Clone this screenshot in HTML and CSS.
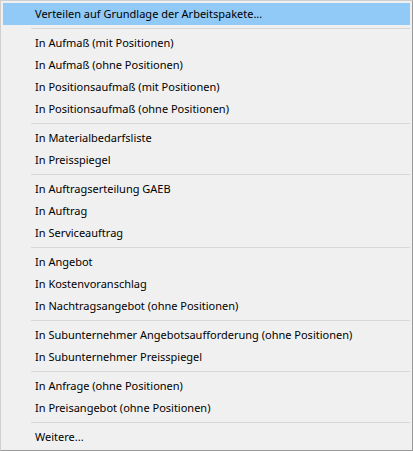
FILE: index.html
```html
<!DOCTYPE html>
<html lang="de">
<head>
    <meta charset="UTF-8">
    <title>Kontextmenü</title>
    <link rel="stylesheet" href="styles.css">
</head>
<body>
    <div class="menu">
        <div class="item active">Verteilen auf Grundlage der Arbeitspakete...</div>
        <div class="sep"></div>
        <div class="item">In Aufmaß (mit Positionen)</div>
        <div class="item">In Aufmaß (ohne Positionen)</div>
        <div class="item">In Positionsaufmaß (mit Positionen)</div>
        <div class="item">In Positionsaufmaß (ohne Positionen)</div>
        <div class="sep"></div>
        <div class="item">In Materialbedarfsliste</div>
        <div class="item">In Preisspiegel</div>
        <div class="sep"></div>
        <div class="item">In Auftragserteilung GAEB</div>
        <div class="item">In Auftrag</div>
        <div class="item">In Serviceauftrag</div>
        <div class="sep"></div>
        <div class="item">In Angebot</div>
        <div class="item">In Kostenvoranschlag</div>
        <div class="item">In Nachtragsangebot (ohne Positionen)</div>
        <div class="sep"></div>
        <div class="item">In Subunternehmer Angebotsaufforderung (ohne Positionen)</div>
        <div class="item">In Subunternehmer Preisspiegel</div>
        <div class="sep"></div>
        <div class="item">In Anfrage (ohne Positionen)</div>
        <div class="item">In Preisangebot (ohne Positionen)</div>
        <div class="sep"></div>
        <div class="item">Weitere...</div>
    </div>
</body>
</html>
```

FILE: styles.css
```css
body {
    margin: 0;
    font-family: "Noto Sans", Arial, sans-serif;
    font-size: 11px;
    color: #000;
}
.menu {
    width: 413px;
    height: 451px;
    box-sizing: border-box;
    padding: 2px;
    background-color: #f0f0f0;
    border: 1px solid #cfcfcf;
    border-right-color: #9a9a9a;
    border-bottom-color: #9a9a9a;
}
.item {
    height: 22px;
    line-height: 22px;
    padding-left: 32px;
    white-space: nowrap;
}
.item.active {
    background-color: #91c9f7;
}
.sep {
    height: 1px;
    margin: 3px 0 3px 28px;
    background-color: #d7d7d7;
}
```
